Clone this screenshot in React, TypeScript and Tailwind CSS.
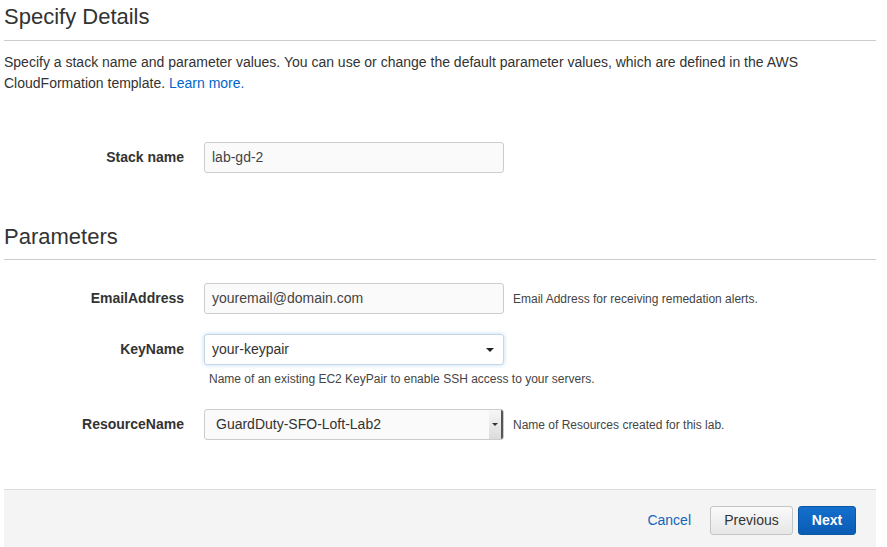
function Caret() {
  return (
    <svg width="8" height="4" viewBox="0 0 8 4" className="block">
      <path d="M0 0h8L4 4z" fill="#222" />
    </svg>
  );
}

function Row({
  label,
  children,
  hint,
  below,
}: {
  label: string;
  children: React.ReactNode;
  hint?: string;
  below?: string;
}) {
  return (
    <div className="flex flex-col">
      <div className="flex items-center">
        <div className="w-[180px] shrink-0 text-right text-[14px] font-bold text-[#333]">
          {label}
        </div>
        <div className="ml-[20px] w-[300px] shrink-0">{children}</div>
        {hint ? (
          <div className="ml-[9px] text-[12px] text-[#444]">{hint}</div>
        ) : null}
      </div>
      {below ? (
        <div className="ml-[205px] mt-[5px] text-[12px] text-[#444]">{below}</div>
      ) : null}
    </div>
  );
}

export default function App() {
  return (
    <div
      className="min-h-[547px] w-[887px] bg-white text-[#333]"
      style={{ fontFamily: '"Liberation Sans", Arial, sans-serif' }}
    >
      <div className="ml-[4px] w-[872px]">
        <h1 className="border-b border-[#cccccc] pb-[11px] pt-[4px] text-[22px] leading-[25px] font-normal text-[#333]">
          Specify Details
        </h1>
        <div className="mt-[11px] text-[14px] leading-[21px] text-[#333]">
          <div>
            Specify a stack name and parameter values. You can use or change the default parameter values, which are defined in the AWS
          </div>
          <div>
            CloudFormation template. <span className="text-[#0066cc]">Learn more.</span>
          </div>
        </div>

        <div className="mt-[48px]">
          <Row label="Stack name">
            <div className="flex h-[31px] items-center rounded-[3px] border border-[#cccccc] bg-[#fafafa] px-[7px] text-[14px] text-[#444]">
              lab-gd-2
            </div>
          </Row>
        </div>

        <h2 className="mt-[51px] border-b border-[#cccccc] pb-[10px] text-[22px] leading-[25px] font-normal text-[#333]">
          Parameters
        </h2>

        <div className="mt-[23px] flex flex-col">
          <Row label="EmailAddress" hint="Email Address for receiving remedation alerts.">
            <div className="flex h-[31px] items-center rounded-[3px] border border-[#cccccc] bg-[#fafafa] px-[7px] text-[14px] text-[#444]">
              youremail@domain.com
            </div>
          </Row>
          <div className="mt-[20px]">
            <Row
              label="KeyName"
              below="Name of an existing EC2 KeyPair to enable SSH access to your servers."
            >
              <div className="flex h-[31px] items-center justify-between rounded-[3px] border border-[#c7d6e6] bg-white pl-[7px] pr-[9px] text-[14px] text-[#333] shadow-[0_0_4px_rgba(102,175,233,0.45)]">
                <span>your-keypair</span>
                <Caret />
              </div>
            </Row>
          </div>
          <div className="mt-[21px]">
            <Row label="ResourceName" hint="Name of Resources created for this lab.">
              <div className="flex h-[31px] items-stretch overflow-hidden rounded-[3px] border border-[#cccccc] bg-[#fafafa] text-[14px] text-[#333]">
                <span className="flex flex-1 items-center pl-[11px]">GuardDuty-SFO-Loft-Lab2</span>
                <span className="flex w-[14px] items-center justify-center border-r-2 border-[#555] bg-gradient-to-b from-[#f6f6f6] to-[#dcdcdc]">
                  <svg width="6" height="3" viewBox="0 0 6 3" className="block">
                    <path d="M0 0h6L3 3z" fill="#333" />
                  </svg>
                </span>
              </div>
            </Row>
          </div>
        </div>

        <div className="mt-[49px] flex h-[59px] items-start justify-end border-t border-[#dddddd] bg-[#f4f4f4] pr-[20px] pt-[16px]">
          <span className="mr-[19px] flex h-[29px] items-center text-[14px] text-[#1166bb]">Cancel</span>
          <button className="h-[29px] w-[83px] rounded-[3px] border border-[#c4c4c4] bg-gradient-to-b from-[#fafafa] to-[#e6e6e6] text-[14px] text-[#333]">
            Previous
          </button>
          <button className="ml-[5px] h-[29px] w-[58px] rounded-[3px] border border-[#0b57a6] bg-gradient-to-b from-[#146fcd] to-[#0a5cb4] text-[14px] font-bold text-white">
            Next
          </button>
        </div>
      </div>
    </div>
  );
}
